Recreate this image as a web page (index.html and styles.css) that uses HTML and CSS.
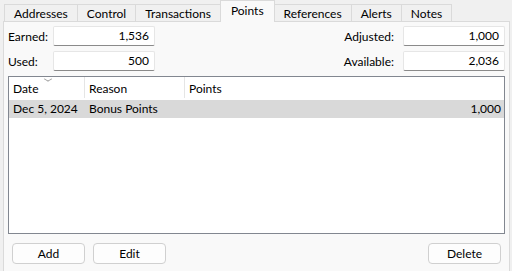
FILE: index.html
```html
<!DOCTYPE html>
<html>
<head>
	<title>Points</title>
	<link rel="stylesheet" href="styles.css">
</head>
<body>

	<div class="tabs">
		<div class="tab">Addresses</div>
		<div class="tab">Control</div>
		<div class="tab">Transactions</div>
		<div class="tab tab-active">Points</div>
		<div class="tab">References</div>
		<div class="tab">Alerts</div>
		<div class="tab">Notes</div>
	</div>

	<div class="panel">

		<div class="fields">
			<div class="field">
				<span class="field-label">Earned:</span>
				<div class="field-box">1,536</div>
			</div>
			<div class="field field-right">
				<span class="field-label">Adjusted:</span>
				<div class="field-box">1,000</div>
			</div>
			<div class="field">
				<span class="field-label">Used:</span>
				<div class="field-box">500</div>
			</div>
			<div class="field field-right">
				<span class="field-label">Available:</span>
				<div class="field-box">2,036</div>
			</div>
		</div>

		<div class="list">
			<div class="list-head">
				<div class="col col-date">Date<span class="sort-arrow"></span></div>
				<div class="col col-reason">Reason</div>
				<div class="col col-points">Points</div>
			</div>
			<div class="list-row list-row-selected">
				<div class="col col-date">Dec 5, 2024</div>
				<div class="col col-reason">Bonus Points</div>
				<div class="col col-points col-num">1,000</div>
			</div>
		</div>

		<div class="buttons">
			<a href="javascript:;" class="btn">Add</a>
			<a href="javascript:;" class="btn">Edit</a>
			<span class="spacer"></span>
			<a href="javascript:;" class="btn">Delete</a>
		</div>

	</div>

</body>
</html>
```

FILE: styles.css
```css
body {
	margin: 0px;
	padding: 0px;
	background: #f0f0f0;
	font-family: Lato, "Open Sans", sans-serif;
	font-size: 12px;
	color: #000;
	height: 271px;
	overflow: hidden;
}

/* tab strip */
.tabs {
	display: flex;
	align-items: flex-end;
	padding: 2px 0px 0px 4px;
	height: 19px;
	position: relative;
	z-index: 2;
}

.tab {
	height: 16px;
	line-height: 17px;
	padding: 0px 9px;
	border: 1px solid #dadada;
	border-bottom: none;
	border-left: none;
	background: #f0f0f0;
	color: #000;
}

.tab:first-child {
	border-left: 1px solid #dadada;
}

.tab-active {
	height: 21px;
	line-height: 20px;
	background: #f9f9f9;
	border-left: 1px solid #dadada;
	margin-left: -1px;
	margin-bottom: -1px;
	margin-right: -1px;
	padding: 0px 10px;
	position: relative;
}

.tab-active + .tab {
	border-left: 1px solid #dadada;
}

/* page of the tab */
.panel {
	margin: 0px 2px 0px 3px;
	height: 250px;
	border: 1px solid #dadada;
	border-bottom: none;
	background: #f9f9f9;
	padding: 4px 4px 0px 4px;
	display: flex;
	flex-direction: column;
}

.fields {
	display: grid;
	grid-template-columns: 1fr 1fr;
	row-gap: 5px;
}

.field {
	display: flex;
	align-items: center;
	height: 20px;
}

.field-right {
	justify-content: flex-end;
}

.field-label {
	width: 45px;
}

.field-right .field-label {
	width: auto;
	margin-right: 9px;
}

.field-box {
	width: 95px;
	height: 18px;
	line-height: 18px;
	padding-right: 5px;
	text-align: right;
	background: #fff;
	border: 1px solid #e6e6e6;
	border-bottom-color: #8a8a8a;
	border-radius: 2px;
	box-sizing: content-box;
}

/* list view */
.list {
	margin-top: 5px;
	height: 156px;
	border: 1px solid #828790;
	background: #fff;
}

.list-head {
	display: flex;
	height: 21px;
	line-height: 23px;
	position: relative;
}

.list-head .col-date,
.list-head .col-reason {
	border-right: 1px solid #e5e5e5;
}

.list-row {
	display: flex;
	height: 18px;
	line-height: 18px;
	margin-top: 2px;
}

.list-row-selected {
	background: #d9d9d9;
}

.col {
	padding-left: 4px;
	box-sizing: border-box;
	white-space: nowrap;
}

.col-date {
	width: 76px;
}

.col-reason {
	width: 100px;
}

.col-points {
	width: 100px;
}

.list-row .col-points {
	flex: 1;
}

.col-num {
	text-align: right;
	padding-right: 3px;
}

.sort-arrow {
	position: absolute;
	left: 36px;
	top: -1px;
	width: 5px;
	height: 5px;
	border-right: 1px solid #9a9a9a;
	border-bottom: 1px solid #9a9a9a;
	transform: scaleY(0.6) rotate(45deg);
}

/* buttons */
.buttons {
	display: flex;
	padding: 9px 4px 0px 4px;
	gap: 8px;
}

.spacer {
	flex: 1;
}

.btn {
	width: 71px;
	height: 19px;
	line-height: 19px;
	text-align: center;
	color: #000;
	text-decoration: none;
	background: #fdfdfd;
	border: 1px solid #d0d0d0;
	border-radius: 4px;
}
```
